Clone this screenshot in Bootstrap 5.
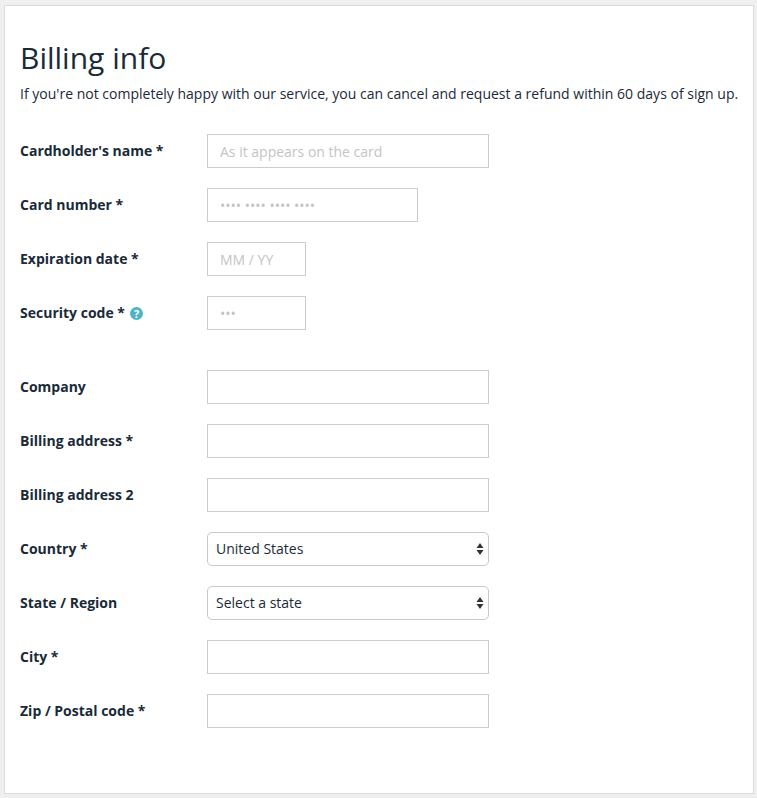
<!DOCTYPE html>
<html lang="en"><head><meta charset="utf-8">
<link href="https://cdn.jsdelivr.net/npm/bootstrap@5.3.0/dist/css/bootstrap.min.css" rel="stylesheet">
<style>
html,body{height:100%}
body{background:#efefef;font-family:"Open Sans","Noto Sans",sans-serif;color:#1a2a38;margin:0;overflow:hidden}
.sheet{background:#fff;border:1px solid #dcdcdc;margin:5px 3px 0 4px;height:789px;padding:31px 15px 0 15px}
.ttl{font-size:30px;font-weight:400;line-height:41px;margin:0 0 6px;color:#1a2a38}
.sub{font-size:14px;line-height:20px;margin:0 0 30px;white-space:nowrap;letter-spacing:.007px}
.fr{height:34px;margin-bottom:20px;display:flex;align-items:center}
.fr.gapb{margin-bottom:40px}
.lb{width:187px;flex:none;font-size:14px;font-weight:700;margin:0;color:#1a2a38;position:relative;top:-1px}
.ip{height:34px;border:1px solid #cccccc;border-radius:0;padding:0 12px;font-size:14px;font-family:inherit;box-shadow:none}
.ip::placeholder{color:#c4c4c4}
.w1{width:282px}.w2{width:211px}.w3{width:99px}
.sl{width:282px;height:34px;border:1px solid #c8c8c8;border-radius:5px;padding:0 8px 2px;font-size:14px;color:#1a2a38;background-color:#fff;background-image:url("data:image/svg+xml,%3Csvg xmlns='http://www.w3.org/2000/svg' width='8' height='14'%3E%3Cpath d='M4 1L7.500 6H.5zM4 13L.5 8h7z' fill='%23333'/%3E%3C/svg%3E");background-repeat:no-repeat;background-position:right 4px center;background-size:8px 14px}
.hlp{vertical-align:-2px;margin-left:1px}
</style></head><body>
<div class="sheet">
<h1 class="ttl">Billing info</h1>
<p class="sub">If you're not completely happy with our service, you can cancel and request a refund within 60 days of sign up.</p>
<form>
<div class="fr"><label class="lb">Cardholder's name *</label><input class="form-control ip w1" placeholder="As it appears on the card"></div>
<div class="fr"><label class="lb">Card number *</label><input class="form-control ip w2" placeholder="•••• •••• •••• ••••"></div>
<div class="fr"><label class="lb">Expiration date *</label><input class="form-control ip w3" placeholder="MM / YY"></div>
<div class="fr gapb"><label class="lb">Security code * <svg class="hlp" width="13" height="13" viewBox="0 0 13 13"><circle cx="6.500" cy="6.500" r="6.500" fill="#4fb3c8"/><text x="6.500" y="10.500" font-size="11" font-weight="700" text-anchor="middle" fill="#fff" font-family="Open Sans">?</text></svg></label><input class="form-control ip w3" placeholder="•••"></div>
<div class="fr"><label class="lb">Company</label><input class="form-control ip w1"></div>
<div class="fr"><label class="lb">Billing address *</label><input class="form-control ip w1"></div>
<div class="fr"><label class="lb">Billing address 2</label><input class="form-control ip w1"></div>
<div class="fr"><label class="lb">Country *</label><select class="form-select sl"><option>United States</option></select></div>
<div class="fr"><label class="lb">State / Region</label><select class="form-select sl"><option>Select a state</option></select></div>
<div class="fr"><label class="lb">City *</label><input class="form-control ip w1"></div>
<div class="fr"><label class="lb">Zip / Postal code *</label><input class="form-control ip w1"></div>
</form>
</div>
<script src="https://cdn.jsdelivr.net/npm/bootstrap@5.3.0/dist/js/bootstrap.bundle.min.js"></script>
</body></html>
